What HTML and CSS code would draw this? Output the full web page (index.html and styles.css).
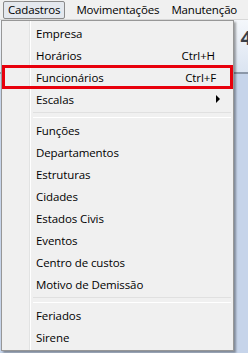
FILE: index.html
```html
<!DOCTYPE html>
<html lang="pt-BR">
<head>
    <meta charset="utf-8">
    <title>Cadastros</title>
    <link rel="stylesheet" href="styles.css">
</head>
<body>
    <div class="menubar">
        <span class="top top-on">Cadastros</span>
        <span class="top">Movimentações</span>
        <span class="top">Manutenção</span>
    </div>
    <div class="desk">
        <div class="toolbar"><span class="glyph">4</span></div>

        <ul class="menu">
            <li class="item"><span>Empresa</span></li>
            <li class="item"><span>Horários</span><em>Ctrl+H</em></li>
            <li class="item mark"><span>Funcionários</span><em>Ctrl+F</em></li>
            <li class="item"><span>Escalas</span><i class="arrow"></i></li>
            <li class="sep"></li>
            <li class="item"><span>Funções</span></li>
            <li class="item"><span>Departamentos</span></li>
            <li class="item"><span>Estruturas</span></li>
            <li class="item"><span>Cidades</span></li>
            <li class="item"><span>Estados Civis</span></li>
            <li class="item"><span>Eventos</span></li>
            <li class="item"><span>Centro de custos</span></li>
            <li class="item"><span>Motivo de Demissão</span></li>
            <li class="sep"></li>
            <li class="item"><span>Feriados</span></li>
            <li class="item"><span>Sirene</span></li>
        </ul>
    </div>
</body>
</html>
```

FILE: styles.css
```css
*{margin:0;padding:0;box-sizing:border-box;}
html,body{width:248px;height:353px;overflow:hidden;}
body{font-family:"Open Sans","Noto Sans",sans-serif;font-size:11.5px;color:#000;background:#c6d4ea;}

.menubar{height:20px;display:flex;align-items:center;padding-left:3px;background:#f0f0f0;border-bottom:1px solid #d8d8d8;white-space:nowrap;letter-spacing:-0.15px;}
.top{height:18px;line-height:16px;padding:0 4px;margin-right:2px;border:1px solid transparent;}
.top-on{background:#e4e8ee;border-color:#8a8a8a;border-radius:2px;margin-right:6px;}

.desk{position:relative;height:333px;}
.toolbar{height:54px;background:linear-gradient(#f4f7fb,#dbe4f1);border-bottom:2px solid #8b97a8;position:relative;}
.glyph{position:absolute;right:-4px;top:4px;font-size:20px;font-weight:bold;color:#3a3f47;}

.menu{position:absolute;left:1px;top:0;width:233px;list-style:none;background:#f0f0f0;border:1px solid #979797;box-shadow:2px 2px 2px rgba(0,0,0,.35);padding:1px 2px 2px;letter-spacing:-0.1px;
    background-image:linear-gradient(90deg,transparent 27px,#e2e3e3 27px,#e2e3e3 28px,#fff 28px,#fff 29px,transparent 29px);}
.item{height:22px;display:flex;align-items:center;padding-left:32px;padding-right:16px;position:relative;}
.item span{flex:1;}
.item em{font-style:normal;}
.arrow{width:0;height:0;border-left:4px solid #000;border-top:4px solid transparent;border-bottom:4px solid transparent;margin-right:-5px;}
.sep{height:6px;margin-left:29px;border-top:1px solid #e0e0e0;border-bottom:1px solid #fff;margin-top:2px;margin-bottom:1px;}
.mark{outline:3px solid #e8000c;outline-offset:-2px;margin-left:-1px;margin-right:-1px;padding-left:33px;}
```
